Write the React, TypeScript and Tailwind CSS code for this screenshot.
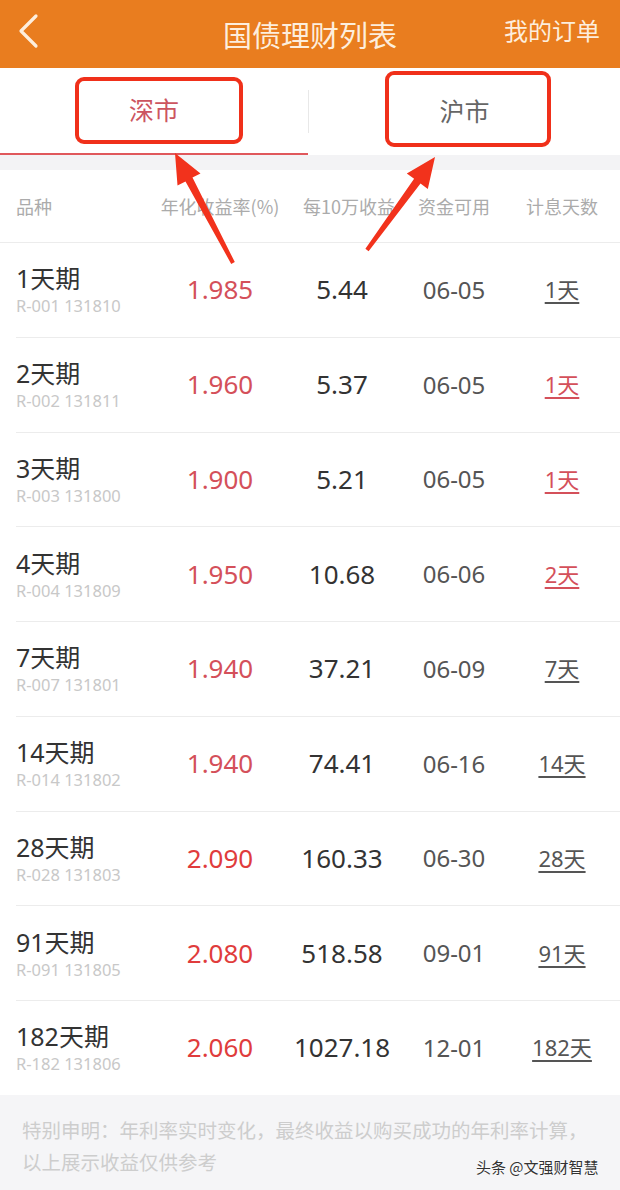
import React from "react";

const rows = [
  { name: "1天期", code: "R-001 131810", rate: "1.985", y: "5.44", d: "06-05", days: "1天", red: false, bright: false },
  { name: "2天期", code: "R-002 131811", rate: "1.960", y: "5.37", d: "06-05", days: "1天", red: true, bright: false },
  { name: "3天期", code: "R-003 131800", rate: "1.900", y: "5.21", d: "06-05", days: "1天", red: true, bright: false },
  { name: "4天期", code: "R-004 131809", rate: "1.950", y: "10.68", d: "06-06", days: "2天", red: true, bright: false },
  { name: "7天期", code: "R-007 131801", rate: "1.940", y: "37.21", d: "06-09", days: "7天", red: false, bright: false },
  { name: "14天期", code: "R-014 131802", rate: "1.940", y: "74.41", d: "06-16", days: "14天", red: false, bright: false },
  { name: "28天期", code: "R-028 131803", rate: "2.090", y: "160.33", d: "06-30", days: "28天", red: false, bright: true },
  { name: "91天期", code: "R-091 131805", rate: "2.080", y: "518.58", d: "09-01", days: "91天", red: false, bright: true },
  { name: "182天期", code: "R-182 131806", rate: "2.060", y: "1027.18", d: "12-01", days: "182天", red: false, bright: true },
];

const grid = "grid grid-cols-[160px_120px_124px_100px_116px] items-center";
const cjk = { fontFamily: '"Noto Sans CJK SC", sans-serif' };

export default function App() {
  return (
    <div
      className="relative w-[620px] h-[1190px] overflow-hidden bg-white"
      style={{ fontFamily: '"Noto Sans", "Noto Sans CJK SC", sans-serif' }}
    >
      {/* Header */}
      <div className="h-[68px] bg-[#e97d1f] flex items-center relative">
        <div className="absolute left-[14px] top-[13px]">
          <svg width="30" height="36" viewBox="0 0 30 36">
            <path d="M22 3 L7 18 L22 33" fill="none" stroke="#fdeedd" strokeWidth="3.2" strokeLinecap="round" strokeLinejoin="round" />
          </svg>
        </div>
        <div className="flex-1 text-center text-[29px] leading-none text-[#fdeedd] pt-[1px]" style={cjk}>
          国债理财列表
        </div>
        <div className="absolute right-[20px] top-[18px] text-[24px] leading-none text-[#fdeedd]" style={cjk}>
          我的订单
        </div>
      </div>

      {/* Tabs */}
      <div className="h-[87px] flex bg-white">
        <div className="w-[308px] flex items-center justify-center border-b-2 border-[#e0585c]">
          <span className="text-[25px] text-[#cc5560] pb-[2px]" style={cjk}>深市</span>
        </div>
        <div className="w-px bg-[#e8e8e8] my-[22px]" />
        <div className="flex-1 flex items-center justify-center">
          <span className="text-[25px] text-[#666] pb-[2px]" style={cjk}>沪市</span>
        </div>
      </div>
      <div className="h-[15px] bg-[#f3f3f5]" />

      {/* Table header */}
      <div className={`${grid} h-[73px] border-b border-[#ececec] text-[18px] text-[#ababab]`} style={cjk}>
        <div className="pl-[16px]">品种</div>
        <div className="text-center">年化收益率(%)</div>
        <div className="text-center pl-[14px]">每10万收益</div>
        <div className="text-center">资金可用</div>
        <div className="text-center">计息天数</div>
      </div>

      {/* Rows */}
      <div>
        {rows.map((r, i) => (
          <div key={i}>
            <div className={`${grid} h-[93.75px]`}>
              <div className="pl-[16px] flex flex-col">
                <span className="text-[25px] leading-[30px] text-[#333]">{r.name}</span>
                <span className="text-[16.5px] leading-[20px] text-[#c8c8c8] mt-[3px]">{r.code}</span>
              </div>
              <div className={`text-center text-[26px] ${r.bright ? "text-[#e03c3c]" : "text-[#d4505a]"}`}>{r.rate}</div>
              <div className="text-center text-[26px] text-[#333]">{r.y}</div>
              <div className="text-center text-[24px] text-[#555]">{r.d}</div>
              <div className="text-center">
                <span className={`text-[22px] underline underline-offset-[4px] ${r.red ? "text-[#d4505a]" : "text-[#555]"}`}>{r.days}</span>
              </div>
            </div>
            {i < rows.length - 1 && <div className="ml-[16px] h-px bg-[#ececec]" />}
          </div>
        ))}
      </div>

      {/* Footer */}
      <div className="bg-[#f5f5f7] h-[96px] pl-[22px] pt-[19px] text-[19.5px] leading-[32px] text-[#cdcdcd] whitespace-nowrap" style={cjk}>
        <div>特别申明：年利率实时变化，最终收益以购买成功的年利率计算，</div>
        <div>以上展示收益仅供参考</div>
      </div>

      {/* Watermark */}
      <div
        className="absolute left-[476px] top-[1159px] text-[15px] leading-none text-[#333]"
        style={{ ...cjk, textShadow: "0 0 2px #fff, 0 0 2px #fff" }}
      >
        头条 @文强财智慧
      </div>

      {/* Annotation boxes */}
      <div className="absolute left-[75px] top-[77px] w-[168px] h-[67px] border-[4px] border-[#f0301a] rounded-[9px]" />
      <div className="absolute left-[385px] top-[71px] w-[166px] h-[76px] border-[4px] border-[#f0301a] rounded-[9px]" />

      {/* Arrows */}
      <svg className="absolute left-0 top-0 pointer-events-none" width="620" height="1190">
        <polygon
          fill="#f2321c"
          points="231.2,263.9 185.5,181.4 177.5,185.6 175,153 200.5,173.4 192.5,177.6 234.8,262.1"
        />
        <polygon
          fill="#f2321c"
          points="435,157 427.8,188.9 420.5,183.6 368.6,251.2 365.4,248.8 414.1,178.8 406.8,173.5"
        />
      </svg>
    </div>
  );
}
